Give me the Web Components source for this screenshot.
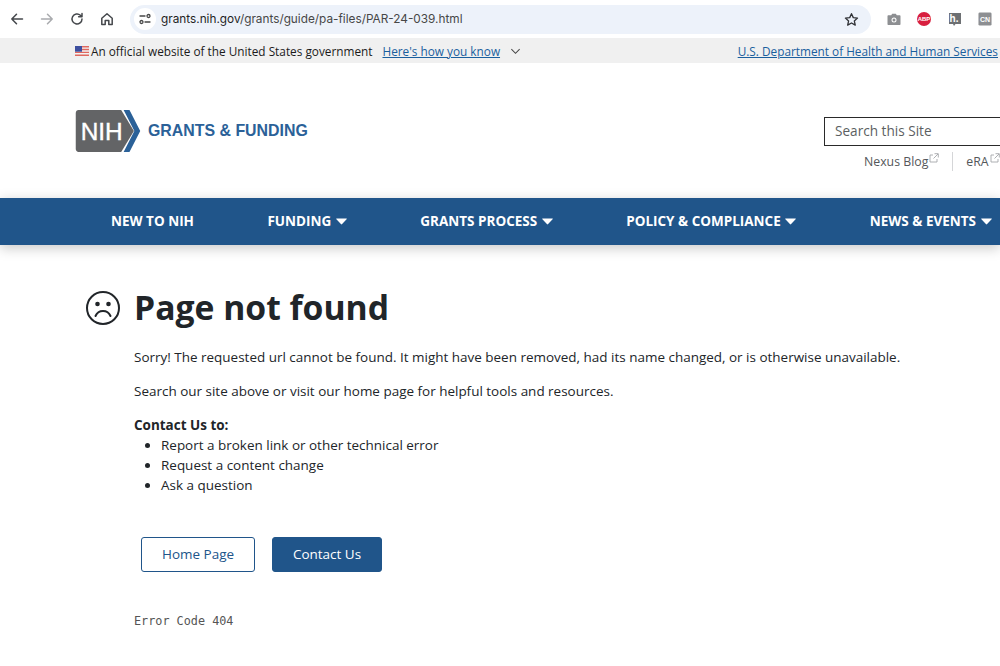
<!DOCTYPE html>
<html lang="en">
<head>
<meta charset="utf-8">
<title>Page not found</title>
<style>
  html, body { margin: 0; padding: 0; background: #fff; overflow: hidden; height: 666px; }
  body { font-family: "Open Sans", "Liberation Sans", sans-serif; color: #212529; }
</style>
</head>
<body>
<browser-bar></browser-bar>
<gov-banner></gov-banner>
<site-header></site-header>
<site-nav></site-nav>
<not-found></not-found>

<script>
class BrowserBar extends HTMLElement {
  constructor() {
    super();
    this.attachShadow({ mode: "open" });
    this.shadowRoot.innerHTML = `
      <style>
        :host { display: flex; align-items: center; height: 38px; background: #fff; box-sizing: border-box; font-family: Inter, "Liberation Sans", sans-serif; overflow: hidden; }
        .nav { display: flex; align-items: center; gap: 14px; padding-left: 9px; }
        .nav svg { width: 16px; height: 16px; fill: none; stroke: #45484c; stroke-width: 1.5; stroke-linecap: round; stroke-linejoin: round; display: block; }
        .nav svg.off { stroke: #a9abae; }
        #omni { margin-left: 15px; width: 741px; height: 29px; border-radius: 15px; background: #edf2fa; display: flex; align-items: center; box-sizing: border-box; padding: 0 12px 0 4px; }
        #tune { width: 22px; height: 22px; border-radius: 50%; background: #fff; display: flex; align-items: center; justify-content: center; flex: none; }
        #url { margin-left: 5px; font-size: 11.8px; color: #1f1f1f; flex: 1; white-space: nowrap; }
        #url span { color: #474747; }
        .ext { display: flex; align-items: center; gap: 16.3px; margin-left: 16px; }
        .ext svg { display: block; width: 14px; }
      </style>
      <div class="nav">
        <svg viewBox="0 0 16 16"><path d="M13.5 8H2.8M7.5 3.2 2.8 8l4.7 4.8"/></svg>
        <svg class="off" viewBox="0 0 16 16"><path d="M2.5 8h10.7M8.5 3.2 13.2 8l-4.7 4.8"/></svg>
        <svg viewBox="0 0 16 16"><path d="M13 8a5 5 0 1 1-1.6-3.7L13 5.8M13 2.4v3.4H9.6"/></svg>
        <svg viewBox="0 0 16 16"><path d="M2.8 7.2 8 2.8l5.2 4.4v6.2H9.8V9.6H6.2v3.8H2.8z"/></svg>
      </div>
      <div id="omni">
        <span id="tune">
          <svg width="14" height="12" viewBox="0 0 14 12" fill="none" stroke="#474747" stroke-width="1.3" stroke-linecap="round"><path d="M2 3h5M7 9h5"/><circle cx="3.5" cy="9" r="1.5"/><circle cx="10.5" cy="3" r="1.5"/></svg>
        </span>
        <span id="url">grants.nih.gov<span>/grants/guide/pa-files/PAR-24-039.html</span></span>
        <svg width="15" height="15" viewBox="0 0 16 16" fill="none" stroke="#303236" stroke-width="1.4" stroke-linejoin="round"><path d="M8 1.8 9.900 6l4.500.5-3.400 3 1 4.500L8 11.700 3.900 14l1-4.500-3.400-3L6.100 6z"/></svg>
      </div>
      <div class="ext">
        <svg height="12" viewBox="0 0 14 12"><path fill="#8d8f92" d="M1.5 2.2h2.700L5.200.8h3.600l1 1.400h2.700c.6 0 1 .4 1 1V11c0 .6-.4 1-1 1h-11c-.6 0-1-.4-1-1V3.200c0-.6.4-1 1-1z"/><circle cx="7" cy="6.900" r="2.500" fill="#fff"/><circle cx="7" cy="6.900" r="1.500" fill="#8d8f92"/></svg>
        <svg height="14" viewBox="0 0 16 16"><circle cx="8" cy="8" r="8" fill="#d81f3f"/><text x="8" y="10.500" font-family="Liberation Sans, sans-serif" font-size="6.800" font-weight="700" fill="#fff" text-anchor="middle">ABP</text></svg>
        <svg height="15" viewBox="0 0 14 15"><path fill="#6d7073" d="M1 1h12v11H7.500L6 14l-1-2H1z"/><text x="6" y="10" font-family="Liberation Sans, sans-serif" font-size="10" font-weight="700" fill="#fff" text-anchor="middle">h.</text></svg>
        <svg height="14" viewBox="0 0 15 15"><rect x=".5" y=".5" width="14" height="14" rx="1.500" fill="#8d8f92"/><text x="7.500" y="10.500" font-family="Liberation Sans, sans-serif" font-size="7.500" font-weight="700" fill="#fff" text-anchor="middle">CN</text></svg>
      </div>
    `;
  }
}
customElements.define("browser-bar", BrowserBar);

class GovBanner extends HTMLElement {
  constructor() {
    super();
    this.attachShadow({ mode: "open" });
    this.shadowRoot.innerHTML = `
      <style>
        :host { display: flex; align-items: center; height: 25px; padding-top: 1px; box-sizing: border-box; background: #f0f0f0; padding-left: 75px; font-size: 11.8px; color: #1b1b1b; white-space: nowrap; overflow: hidden; }
        svg { display: block; margin-right: 2px; flex: none; }
        a { color: #1a5f9e; text-decoration: underline; }
        #how { margin-left: 10px; white-space: pre; }
        #chev { margin-left: 10px; }
        #dept { margin-left: auto; margin-right: 2px; }
      </style>
      <svg width="14" height="10" viewBox="0 0 14 10">
        <rect width="14" height="10" fill="#f3f3f3"/>
        <path d="M0 0h14v1.400H0zM0 2.800h14v1.400H0zM0 5.700h14v1.400H0zM0 8.600h14V10H0z" fill="#e0685f"/>
        <rect width="7" height="5.700" fill="#3d4f9f"/>
      </svg>
      <span>An official website of the United States government</span>
      <a id="how" href="#">Here's how you know</a>
      <svg id="chev" width="11" height="7" viewBox="0 0 12 7" fill="none" stroke="#444" stroke-width="1.100"><path d="M1.500 1 6 5.500 10.500 1"/></svg>
      <a id="dept" href="#">U.S. Department of Health and Human Services</a>
    `;
  }
}
customElements.define("gov-banner", GovBanner);

class ExtMark extends HTMLElement {
  constructor() {
    super();
    this.attachShadow({ mode: "open" });
    this.shadowRoot.innerHTML = `
      <style>:host { display: inline-block; width: 10px; height: 10px; margin-left: 1px; } svg { display: block; }</style>
      <svg width="10" height="10" viewBox="0 0 10 10" fill="none" stroke="#a5a7aa" stroke-width=".9"><path d="M4 2H1v7h7V6M5.500.7h3.800v3.800M9 1 4.500 5.500"/></svg>
    `;
  }
}
customElements.define("ext-mark", ExtMark);

class SiteHeader extends HTMLElement {
  constructor() {
    super();
    this.attachShadow({ mode: "open" });
    this.shadowRoot.innerHTML = `
      <style>
        :host { display: flex; height: 135px; background: #fff; box-sizing: border-box; padding-left: 75px; overflow: hidden; white-space: nowrap; }
        #logo { display: flex; align-items: center; gap: 7px; align-self: flex-start; margin-top: 47px; }
        #logo svg { display: block; }
        #word { font: 700 15.9px "Liberation Sans", Arial, sans-serif; color: #2b6198; }
        #tools { margin-left: auto; flex: 0 0 176px; width: 176px; padding-top: 54px; }
        #search { width: 220px; height: 29px; padding-bottom: 2px; border: 1.5px solid #2a2a2a; box-sizing: border-box; padding-left: 10px; display: flex; align-items: center; font-size: 13.6px; color: #5c5f62; }
        #links { display: flex; align-items: center; margin-top: 6px; margin-left: 40px; font-size: 12.3px; color: #54575a; }
        #links span { display: inline-flex; align-items: flex-start; }
        #sep { width: 1px; height: 19px; background: #d5d6d8; margin: 0 13px; }
      </style>
      <div id="logo">
        <svg width="66" height="42" viewBox="0 0 66 43">
          <path fill="#636466" d="M3 0h47l14 21.500L50 43H3c-1.700 0-3-1.300-3-3V3c0-1.700 1.300-3 3-3z" transform="scale(.93 1)"/>
          <path fill="#2b6198" d="M49 0h6l11 21.500L55 43h-6l11-21.500z"/>
          <text x="5" y="31" font-family="Liberation Sans, Arial, sans-serif" font-size="25" fill="#fff" stroke="#fff" stroke-width=".4" textLength="43" lengthAdjust="spacingAndGlyphs">NIH</text>
        </svg>
        <span id="word">GRANTS &amp; FUNDING</span>
      </div>
      <div id="tools">
        <div id="search">Search this Site</div>
        <div id="links">
          <span>Nexus Blog<ext-mark></ext-mark></span>
          <i id="sep"></i>
          <span>eRA<ext-mark></ext-mark></span>
        </div>
      </div>
    `;
  }
}
customElements.define("site-header", SiteHeader);

class NavItem extends HTMLElement {
  constructor() {
    super();
    this.attachShadow({ mode: "open" });
    this.shadowRoot.innerHTML = `
      <style>
        :host { display: inline-flex; align-items: center; gap: 4.5px; flex: none; }
        svg { display: none; }
        :host([menu]) svg { display: block; }
      </style>
      <slot></slot>
      <svg width="11" height="7" viewBox="0 0 11 7"><path fill="#fff" d="M.5.5h10c.3 0 .5.3.3.600L5.900 6.300c-.2.200-.6.200-.8 0L.2 1.100C0 .8.2.5.5.5z"/></svg>
    `;
  }
}
customElements.define("nav-item", NavItem);

class SiteNav extends HTMLElement {
  constructor() {
    super();
    this.attachShadow({ mode: "open" });
    this.shadowRoot.innerHTML = `
      <style>
        :host { display: flex; align-items: center; gap: 73.5px; height: 47px; padding-bottom: 1px; box-sizing: border-box; background: #20558a; padding-left: 111px; color: #fff; font-size: 13.5px; font-weight: 700; white-space: nowrap; overflow: hidden; box-shadow: 0 3px 12px rgba(0,0,0,.22); position: relative; }
      </style>
      <nav-item>NEW TO NIH</nav-item>
      <nav-item menu>FUNDING</nav-item>
      <nav-item menu>GRANTS PROCESS</nav-item>
      <nav-item menu>POLICY &amp; COMPLIANCE</nav-item>
      <nav-item menu>NEWS &amp; EVENTS</nav-item>
    `;
  }
}
customElements.define("site-nav", SiteNav);

class NotFound extends HTMLElement {
  constructor() {
    super();
    this.attachShadow({ mode: "open" });
    this.shadowRoot.innerHTML = `
      <style>
        :host { display: block; padding: 40px 0 0 85px; font-size: 13.48px; color: #212529; }
        #title { display: flex; align-items: center; gap: 13px; height: 46px; }
        #title svg { display: block; flex: none; }
        h1 { margin: 0; font-size: 33.7px; font-weight: 700; line-height: 46px; padding-bottom: 2px; }
        #body { padding-left: 49px; }
        p { margin: 0; line-height: 20px; }
        #sorry { margin-top: 16px; }
        #search { margin-top: 14px; }
        #contact { margin-top: 14px; font-weight: 700; }
        ul { margin: 0; padding-left: 27px; line-height: 20px; }
        #btns { display: flex; gap: 17px; margin: 42px 0 0 7px; }
        .btn { height: 35px; padding-bottom: 1px; box-sizing: border-box; border-radius: 3px; display: flex; align-items: center; justify-content: center; border: 1px solid #20558a; }
        #home { width: 114px; color: #20558a; background: #fff; }
        #us { width: 110px; color: #fff; background: #20558a; }
        #code { margin-top: 42px; font: 11.8px "DejaVu Sans Mono", "Liberation Mono", monospace; color: #555; }
      </style>
      <div id="title">
        <svg width="36" height="36" viewBox="0 0 36 36" fill="none" stroke="#212529" stroke-width="2" stroke-linecap="round">
          <circle cx="18" cy="18" r="16"/>
          <circle cx="12.5" cy="14" r="2.300" fill="#212529" stroke="none"/>
          <circle cx="23.5" cy="14" r="2.300" fill="#212529" stroke="none"/>
          <path d="M10.500 26c1.500-3.500 4.200-5 7.500-5s6 1.500 7.500 5"/>
        </svg>
        <h1>Page not found</h1>
      </div>
      <div id="body">
        <p id="sorry">Sorry! The requested url cannot be found. It might have been removed, had its name changed, or is otherwise unavailable.</p>
        <p id="search">Search our site above or visit our home page for helpful tools and resources.</p>
        <p id="contact">Contact Us to:</p>
        <ul>
          <li>Report a broken link or other technical error</li>
          <li>Request a content change</li>
          <li>Ask a question</li>
        </ul>
        <div id="btns">
          <div class="btn" id="home">Home Page</div>
          <div class="btn" id="us">Contact Us</div>
        </div>
        <div id="code">Error Code 404</div>
      </div>
    `;
  }
}
customElements.define("not-found", NotFound);
</script>
</body>
</html>
